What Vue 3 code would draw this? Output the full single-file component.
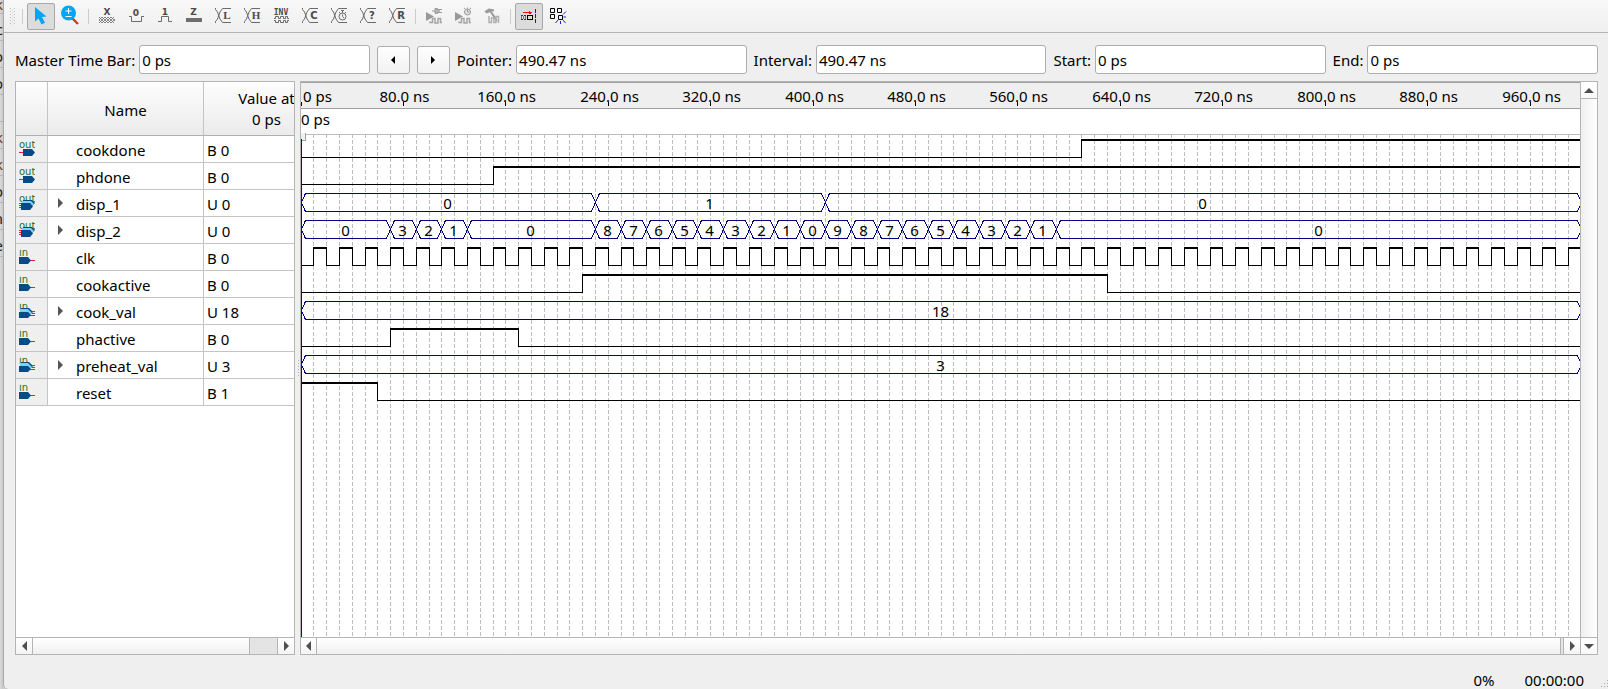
<script setup>
const SCALE = 1.2803
const END = 1000
const ROW = 27
const FIRST_ROW = 57
const px = (t) => Math.floor(t * SCALE)

const bits = (edges, start) => ({ edges, start })
const clkEdges = Array.from({ length: 99 }, (_, i) => (i + 1) * 10)
const disp2 = [[0, '0'], [70, '3'], [90, '2'], [110, '1'], [130, '0']]
'876543210987654321'.split('').forEach((v, i) => disp2.push([230 + i * 20, v]))
disp2.push([590, '0'])

const signals = [
  { name: 'cookdone', value: 'B 0', dir: 'out', wave: bits([610], 0) },
  { name: 'phdone', value: 'B 0', dir: 'out', wave: bits([150], 0) },
  { name: 'disp_1', value: 'U 0', dir: 'out', bus: [[0, '0'], [230, '1'], [410, '0']] },
  { name: 'disp_2', value: 'U 0', dir: 'out', bus: disp2 },
  { name: 'clk', value: 'B 0', dir: 'in', wave: bits(clkEdges, 0) },
  { name: 'cookactive', value: 'B 0', dir: 'in', wave: bits([220, 630], 0) },
  { name: 'cook_val', value: 'U 18', dir: 'in', bus: [[0, '18']] },
  { name: 'phactive', value: 'B 0', dir: 'in', wave: bits([70, 170], 0) },
  { name: 'preheat_val', value: 'U 3', dir: 'in', bus: [[0, '3']] },
  { name: 'reset', value: 'B 1', dir: 'in', wave: bits([60], 1) },
]

function wavePath({ edges, start }, top) {
  let level = start
  const y = () => top + (level ? 0.5 : 18.5)
  let d = `M0 ${y()}`
  let bold = ''
  let last = 0
  for (const t of [...edges, END]) {
    const x = px(t) + 0.5
    if (level) bold += `M${last} ${top + 1.5}H${x + 0.5}`
    d += `H${x}`
    last = x - 0.5
    if (t !== END) {
      level = 1 - level
      d += `V${y()}`
    }
  }
  return d + bold
}

function segments(bus, top) {
  return bus.map(([t, label], i) => {
    const a = px(t) + 0.5
    const b = px(i + 1 < bus.length ? bus[i + 1][0] : END) + 0.5
    const hi = top + 0.5
    const mid = top + 9.5
    const lo = top + 18.5
    return {
      label,
      x: Math.floor((a + b) / 2) - 0.5,
      y: top + 16,
      d: `M${a} ${mid}L${a + 4} ${hi}H${b - 4}L${b} ${mid}L${b - 4} ${lo}H${a + 4}Z`,
    }
  })
}

const rows = signals.map((s, i) => {
  const top = FIRST_ROW + i * ROW
  return {
    name: s.name,
    path: s.wave ? wavePath(s.wave, top) : '',
    segs: s.bus ? segments(s.bus, top) : [],
  }
})

const grid = Array.from({ length: 99 }, (_, i) => px((i + 1) * 10) + 0.5)
const ticks = Array.from({ length: 12 }, (_, i) => ({
  x: px((i + 1) * 80) + 0.5,
  label: `${(i + 1) * 80}.0 ns`,
}))

const fields = [
  { id: 'pointer', label: 'Pointer:', value: '490.47 ns' },
  { id: 'interval', label: 'Interval:', value: '490.47 ns' },
  { id: 'start', label: 'Start:', value: '0 ps' },
  { id: 'end', label: 'End:', value: '0 ps' },
]

const tools = [
  { id: 'select', title: 'Selection Tool', on: true },
  { id: 'zoom', title: 'Zoom Tool' },
  { id: 'sep1' },
  { id: 'x', title: 'Forcing Unknown' },
  { id: 'low', title: 'Forcing Low' },
  { id: 'high', title: 'Forcing High' },
  { id: 'z', title: 'High Impedance' },
  { id: 'xl', title: 'Weak Low', glyph: 'L', serif: true },
  { id: 'xh', title: 'Weak High', glyph: 'H', serif: true },
  { id: 'inv', title: 'Invert' },
  { id: 'xc', title: 'Count Value', glyph: 'C' },
  { id: 'xo', title: 'Overwrite Clock', clock: true },
  { id: 'xq', title: 'Arbitrary Value', glyph: '?' },
  { id: 'xr', title: 'Random Values', glyph: 'R' },
  { id: 'sep2' },
  { id: 'func', title: 'Run Functional Simulation', off: true },
  { id: 'timing', title: 'Run Timing Simulation', off: true },
  { id: 'gen', title: 'Generate Testbench', off: true },
  { id: 'sep3' },
  { id: 'snap', title: 'Snap to Transition', on: true },
  { id: 'snapgrid', title: 'Snap to Grid' },
]

const behind = ['k', 'c', 'o', 'o', '', 'k', 'k', 'o', 'n', 'e']
</script>

<template>
  <div class="screen">
    <aside class="behind" aria-hidden="true">
      <div v-for="(c, i) in behind" :key="i" class="behind-row" :class="{ warm: c === 'k' }"><span>{{ c }}</span></div>
    </aside>
    <main class="window">
      <div class="toolbar" role="toolbar" aria-label="Waveform tools">
        <svg class="grip" width="5" height="17" viewBox="0 0 5 17">
          <path d="M.5 0V17M4.5 0V17" stroke="#b9b9b9" stroke-dasharray="1 2" />
          <path d="M2.5 1.5V17" stroke="#c9c9c9" stroke-dasharray="1 2" />
        </svg>
        <span class="sep"></span>
        <template v-for="t in tools" :key="t.id">
          <span v-if="!t.title" class="sep"></span>
          <button v-else type="button" class="tool" :class="{ on: t.on }" :disabled="t.off" :aria-label="t.title">
            <svg width="24" height="24" viewBox="0 0 24 24" fill="none" stroke="#6a6a6a" class="ico">
              <path v-if="t.id === 'select'" d="M6 3V17.500L9.500 14.500L12.500 20.500L16 18.700L13 13L17.500 12.500Z" fill="#03a5f6" stroke="none" />
              <g v-else-if="t.id === 'zoom'">
                <path d="M14.500 14.500L20 20" stroke="#c04020" stroke-width="2.400" />
                <circle cx="10.500" cy="9" r="7.500" fill="#03a5f6" stroke="none" />
                <path d="M10.500 4V10M7.500 7H13.500M7.500 12.500H13.500" stroke="#fff" />
              </g>
              <g v-else-if="t.id === 'x'">
                <text x="12" y="11" class="g gm">X</text>
                <path d="M4 13l6 6l6-6l4 4M4 19l6-6l6 6l4-4M4 16l3-3l6 6l6-6M4 16l3 3l6-6l6 6" stroke-width=".8" />
              </g>
              <g v-else-if="t.id === 'low'">
                <text x="12" y="12" class="g gm">0</text>
                <path d="M5 12.500H7.500V17.500H17.500V12.500H20" />
              </g>
              <g v-else-if="t.id === 'high'">
                <text x="12" y="11" class="g gm">1</text>
                <path d="M5 17.500H8.500V12.500H15.500V17.500H19" />
              </g>
              <g v-else-if="t.id === 'z'">
                <text x="11.500" y="11" class="g gm">Z</text>
                <path d="M4 14H20V18H4Z" fill="#6e6e6e" stroke="none" />
              </g>
              <g v-else-if="t.id === 'inv'">
                <text x="12" y="11" class="g gi">INV</text>
                <path d="M5 14.500H6.500V12.500H9.500V14.500H11.500V12.500H14.500V14.500H16.500V12.500H18.500V14.500H20M5 16.500H6.500V18.500H9.500V16.500H11.500V18.500H14.500V16.500H16.500V18.500H18.500V16.500H20" />
              </g>
              <g v-else-if="t.glyph || t.clock">
                <path d="M4.500 4V5.500L6.500 8L9 15L11.500 18.500H20M4.500 19V17.500L6.500 15L9 8L11.500 4.500H20" />
                <text v-if="t.glyph" x="16" y="15" class="g" :class="t.serif ? 'gs' : 'gb'">{{ t.glyph }}</text>
                <g v-else><circle cx="15.500" cy="12.500" r="3.500" /><path d="M15.500 6V9M14 6.500H17M15.500 10.500V12.500L17 14M12 8L13.500 9.500M19 8L17.500 9.500" /></g>
              </g>
              <g v-else-if="t.id === 'func' || t.id === 'timing'">
                <path d="M4 8V17L12 12.500Z" fill="#999" stroke="none" />
                <path d="M8 17.500V18.500H10.500V14.500H13V19H16V14.500H18.500V18.500H20" stroke="#a5a5a5" stroke-width="1.500" />
                <path v-if="t.id === 'func'" d="M10 7H13M13 4.500H15.500L17.500 7L15.500 9.500H13ZM15 5.500H20M15 8.500H20" stroke="#9a9a9a" fill="#b5b5b5" />
                <g v-else><circle cx="16.500" cy="8" r="3" stroke="#9a9a9a" fill="#e0e0e0" /><path d="M16.500 6V8H18M13 4L14.500 5M20 4L18.500 5M16.500 3.500V5" stroke="#9a9a9a" /></g>
              </g>
              <g v-else-if="t.id === 'gen'">
                <path d="M5 8L9 5.500L14 6.500M10 6.500L17 17M6 8.500L10 7" stroke="#999" stroke-width="2" />
                <path d="M9 12V18.500H11.500V14H14V18.500H16V12.500H18.500V19" stroke="#b0b0b0" stroke-width="1.500" />
              </g>
              <g v-else-if="t.id === 'snap'" shape-rendering="crispEdges">
                <path d="M6 8.500H15" stroke="#f01010" />
                <path d="M12.500 7V10M13.500 7.500V9.500" stroke="#f01010" />
                <path d="M4 11.500H10M4 15.500H10" stroke="#333" stroke-dasharray="2 1" />
                <path d="M4 13.500H10" stroke="#777" stroke-width="3" stroke-dasharray="1 1" />
                <path d="M10.500 11.500H15.500V15.500H10.500Z" stroke="#000" />
                <path d="M18.500 5V19" stroke="#1010f0" stroke-dasharray="4 1" />
              </g>
              <g v-else>
                <path d="M4.500 4.500H8.500V8.500H4.500ZM11.500 4.500H15.500V8.500H11.500ZM4.500 10.500H8.500V14.500H4.500ZM12.500 11.500H16.500V15.500H12.500Z" stroke="#000" />
                <path d="M17 10.500L20 7.500M17.500 13H20M17 16L19.500 19M14.500 17V20M12 16L9.500 19" stroke="#2020e0" />
              </g>
            </svg>
          </button>
        </template>
      </div>

      <form class="times" @submit.prevent>
        <label for="master">Master Time Bar:</label>
        <input id="master" type="text" value="0 ps" />
        <button type="button" class="step" aria-label="Previous transition"><svg width="4" height="8" viewBox="0 0 4 8"><path d="M0 4L4 0V8Z" /></svg></button>
        <button type="button" class="step" aria-label="Next transition"><svg width="4" height="8" viewBox="0 0 4 8"><path d="M4 4L0 0V8Z" /></svg></button>
        <template v-for="f in fields" :key="f.id">
          <label :for="f.id">{{ f.label }}</label>
          <input :id="f.id" type="text" :value="f.value" />
        </template>
      </form>

      <div class="panes">
        <section class="names">
          <div class="table-clip">
            <table>
              <colgroup><col class="c-icon" /><col class="c-name" /><col class="c-value" /></colgroup>
              <thead>
                <tr><th></th><th class="h-name">Name</th><th>Value at<br />0 ps</th></tr>
              </thead>
              <tbody>
                <tr v-for="s in signals" :key="s.name">
                  <td class="port">
                    <svg width="16" height="18" viewBox="0 0 16 18">
                      <text x="0" y="7" class="dir">{{ s.dir }}</text>
                      <g v-if="s.dir === 'out' && !s.bus"><path d="M0 11h4v1H0z" fill="#e8202c" /><path d="M4 8H13L16 11.500L13 15H4Z" fill="#044b87" /></g>
                      <g v-else-if="s.dir === 'out'">
                        <path d="M4 5H13L16 8L12 12H4Z" fill="#044b87" />
                        <path d="M3 6H12L15 9L12 12H3Z" fill="#7fd0f8" />
                        <path d="M0 8h4v1H0zM0 10h3v1H0zM0 12h3v1H0z" fill="#e8202c" />
                        <path d="M2 8H11L14 11.500L11 15H2Z" fill="#044b87" />
                      </g>
                      <g v-else-if="!s.bus"><path d="M11 11h5v1h-5z" fill="#e8202c" /><path d="M0 8H9L12 11.500L9 15H0Z" fill="#044b87" /></g>
                      <g v-else>
                        <path d="M2 5H10L14 9L12 11H2Z" fill="#044b87" />
                        <path d="M1 6H9L13 10L10 12H1Z" fill="#7fd0f8" />
                        <path d="M13 8h3v1h-3zM13 10h3v1h-3zM11 12h5v1h-5z" fill="#e8202c" />
                        <path d="M0 9H9L12 12L9 15H0Z" fill="#044b87" />
                      </g>
                    </svg>
                  </td>
                  <td>
                    <span class="name-cell">
                      <button v-if="s.bus" type="button" class="expand" :aria-label="'Expand ' + s.name"><svg width="5" height="10" viewBox="0 0 5 10"><path d="M0 0L5 5L0 10Z" /></svg></button>
                      <span v-else class="expand"></span>
                      <span class="label">{{ s.name }}</span>
                    </span>
                  </td>
                  <td class="value">{{ s.value }}</td>
                </tr>
              </tbody>
            </table>
          </div>
          <div class="hbar">
            <button type="button" aria-label="Scroll left"><svg width="5" height="10" viewBox="0 0 5 10"><path d="M5 0V10L0 5Z" /></svg></button>
            <div class="track"><span class="thumb"></span></div>
            <button type="button" aria-label="Scroll right"><svg width="5" height="10" viewBox="0 0 5 10"><path d="M0 0V10L5 5Z" /></svg></button>
          </div>
        </section>

        <div class="splitter"><span></span></div>

        <section class="waves">
          <div class="wave-col">
            <svg class="plot" role="img" aria-label="Waveforms">
              <rect width="100%" height="26" fill="#efefef" />
              <path d="M0 .5H6000M0 26.500H6000" stroke="#a0a0a0" />
              <path d="M0 52.500H6000" stroke="#bdbdbd" />
              <line v-for="x in grid" :key="x" :x1="x" :x2="x" y1="53" y2="100%" stroke="#bebebe" stroke-dasharray="4 2" stroke-dashoffset="1" />
              <text x="2" y="20">0 ps</text>
              <text x="0" y="43">0 ps</text>
              <g v-for="t in ticks" :key="t.label">
                <text :x="t.x + 1" y="20" text-anchor="middle">{{ t.label }}</text>
                <line :x1="t.x" :x2="t.x" y1="20" y2="24" stroke="#000" />
              </g>
              <path d="M.5 20V24" stroke="#000" />
              <path d="M0 51H5V58H0Z" fill="#f0f0f0" />
              <path d="M4.500 51V58.500H0" fill="none" stroke="#a0a0a0" />
              <g v-for="r in rows" :key="r.name">
                <path v-if="r.path" :d="r.path" fill="none" stroke="#000" />
                <g v-for="(s, i) in r.segs" :key="i">
                  <path :d="s.d" fill="none" stroke="#000080" />
                  <text :x="s.x" :y="s.y" text-anchor="middle">{{ s.label }}</text>
                </g>
              </g>
              <line x1=".5" x2=".5" y1="57" y2="100%" stroke="#0000d8" />
            </svg>
            <div class="hbar">
              <button type="button" aria-label="Scroll left"><svg width="5" height="10" viewBox="0 0 5 10"><path d="M5 0V10L0 5Z" /></svg></button>
              <div class="track"><span class="thumb slim"></span></div>
              <button type="button" aria-label="Scroll right"><svg width="5" height="10" viewBox="0 0 5 10"><path d="M0 0V10L5 5Z" /></svg></button>
            </div>
          </div>
          <div class="vbar">
            <button type="button" aria-label="Scroll up"><svg width="10" height="5" viewBox="0 0 10 5"><path d="M0 5H10L5 0Z" /></svg></button>
            <div class="vtrack"></div>
            <button type="button" aria-label="Scroll down"><svg width="10" height="5" viewBox="0 0 10 5"><path d="M0 0H10L5 5Z" /></svg></button>
          </div>
        </section>
      </div>

      <footer class="status">
        <span>0%</span><span>00:00:00</span>
        <svg width="8" height="9" viewBox="0 0 8 9"><path d="M7 0h1v1h-1zM4 3h1v1h-1zM7 3h1v1h-1zM1 6h1v1h-1zM4 6h1v1h-1zM7 6h1v1h-1z" fill="#aaa" /></svg>
      </footer>
    </main>
  </div>
</template>

<style>
body { background: #cfcfcf; }
</style>

<style scoped>
.screen {
  display: flex;
  height: 100vh;
  min-height: 500px;
  overflow: hidden;
  background: #cfcfcf;
  font: 15px/20px "Noto Sans", sans-serif;
  color: #000;
}
.screen * { box-sizing: border-box; }
button { font: inherit; margin: 0; padding: 0; border: 0; display: flex; align-items: center; justify-content: center; }
.behind { width: 3px; flex: none; overflow: hidden; background: linear-gradient(90deg, #dadada, #c8c8c8); }
.behind-row { height: 27px; display: flex; justify-content: flex-end; overflow: hidden; border-bottom: 1px solid #b4b4b4; line-height: 30px; color: #222; }
.behind-row:first-child { height: 14px; line-height: 8px; }
.behind-row.warm { color: #7a3c10; }
.window {
  flex: 1;
  min-width: 0;
  display: flex;
  flex-direction: column;
  background: #efefef;
  border-left: 1px solid #aaa;
  border-bottom-left-radius: 5px;
}
.toolbar {
  flex: none;
  height: 33px;
  display: flex;
  align-items: center;
  gap: 1px;
  padding-left: 6px;
  background: linear-gradient(#f8f8f8, #efefef);
  border-bottom: 1px solid #b4b4b4;
}
.grip { margin-right: 3px; }
.sep { width: 7px; height: 15px; background: linear-gradient(#ccc, #ccc) center / 1px 100% no-repeat; }
.tool { width: 28px; height: 27px; background: none; border: 1px solid transparent; border-radius: 2px; }
.tool.on { background: #dcdcdc; border-color: #a8a8a8; }
.ico { flex: none; }
.g { fill: #4a4a4a; stroke: none; text-anchor: middle; font-weight: bold; }
.gm { font-size: 9px; font-family: "DejaVu Sans", sans-serif; }
.gi { font-size: 8px; font-family: "DejaVu Sans Mono", monospace; }
.gb { font-size: 10px; font-family: "DejaVu Sans", sans-serif; }
.gs { font-size: 11px; font-family: "Liberation Serif", serif; }

.times { flex: none; display: flex; align-items: center; gap: 7px; padding: 12px 10px 7px 11px; }
.times label { white-space: nowrap; margin-right: -3px; }
.times input {
  flex: 1 1 0;
  min-width: 0;
  height: 29px;
  font: inherit;
  padding: 0 2px;
  color: #000;
  background: #fff;
  border: 1px solid #adadad;
  border-radius: 3px;
  outline: none;
}
.step { width: 33px; height: 28px; background: linear-gradient(#fefefe, #f2f2f2); border: 1px solid #adadad; border-radius: 3px; }

.panes { flex: 1; min-height: 0; display: flex; padding: 0 10px 0 11px; }
.names { flex: none; width: 280px; display: flex; flex-direction: column; border: 1px solid #b4b4b4; }
.table-clip { flex: 1; min-height: 0; overflow: hidden; background: #fff; }
table { table-layout: fixed; width: 314px; border-collapse: separate; border-spacing: 0; }
.c-icon { width: 32px; }
.c-name { width: 156px; }
.c-value { width: 126px; }
th, td { padding: 0; border-bottom: 1px solid #c4c4c4; border-right: 1px solid #c4c4c4; font-weight: normal; }
th { height: 54px; background: linear-gradient(#fdfdfd, #ebebeb); border-bottom-color: #b0b0b0; line-height: 21px; }
.h-name { padding-top: 4px; }
td { height: 27px; line-height: 24px; }
.port { background: #efefef; }
.port svg { display: block; margin: 2px 0 0 3px; }
.dir { font: 10px "DejaVu Sans", sans-serif; fill: #1f6f1f; }
.name-cell { display: flex; align-items: center; height: 26px; padding-left: 10px; }
.label, .value { padding-top: 2px; }
.expand { width: 5px; height: 10px; margin-right: 13px; background: none; fill: #555; }
.value { padding-left: 3px; }

.hbar { flex: none; height: 17px; display: flex; border-top: 1px solid #b4b4b4; background: linear-gradient(#fff, #f0f0f0); }
.hbar button { width: 16px; background: linear-gradient(#fff, #f4f4f4); fill: #4f4f4f; }
.hbar button:first-child { border-right: 1px solid #b4b4b4; }
.names .hbar button:first-child { width: 17px; }
.track { flex: 1; display: flex; justify-content: flex-end; }
.thumb { width: 29px; background: #e4e4e4; border-left: 1px solid #b4b4b4; border-right: 1px solid #b4b4b4; }
.thumb.slim { width: 4px; }
.splitter { width: 5px; flex: none; display: flex; align-items: center; justify-content: flex-end; padding-right: 1px; }
.splitter span { width: 1px; height: 16px; background: repeating-linear-gradient(#b0b0b0 0 1px, transparent 1px 3px); }
.waves { flex: 1; min-width: 0; display: flex; border: 1px solid #b4b4b4; }
.wave-col { flex: 1; min-width: 0; display: flex; flex-direction: column; }
.plot { display: block; flex: 1 1 0; min-height: 0; width: 100%; background: #fff; shape-rendering: crispEdges; overflow: hidden; }
.vbar { flex: none; width: 17px; display: flex; flex-direction: column; border-left: 1px solid #b4b4b4; background: linear-gradient(90deg, #efefef, #fff); }
.vbar button { height: 17px; background: linear-gradient(#fff, #f8f8f8); fill: #4f4f4f; }
.vbar button:first-child { border-bottom: 1px solid #b4b4b4; }
.vbar button:last-child { border-top: 1px solid #b4b4b4; }
.vtrack { flex: 1; }
.status { flex: none; height: 34px; display: flex; justify-content: flex-end; align-items: flex-end; gap: 30px; position: relative; padding-right: 24px; }
.status span { line-height: 17px; }
.status svg { position: absolute; right: 0; bottom: 0; }
</style>
